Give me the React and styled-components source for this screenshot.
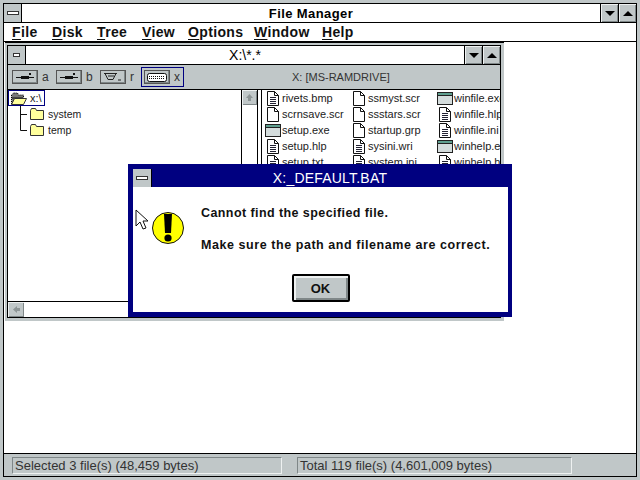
import React from 'react';
import styled, { createGlobalStyle, css } from 'styled-components';

const GRAY = '#c0c7c8';
const NAVY = '#000080';
const SANS = '"Liberation Sans", Arial, sans-serif';

const Global = createGlobalStyle`
    html, body {
        margin: 0;
        padding: 0;
        background: #fff;
    }
    * {
        box-sizing: border-box;
    }
`;

const Screen = styled.div`
    position: relative;
    width: 640px;
    height: 480px;
    overflow: hidden;
    padding: 3px;
    background: ${GRAY};
    font-family: ${SANS};
    color: #000;
`;

const Frame = styled.div`
    width: 100%;
    height: 100%;
    display: flex;
    flex-direction: column;
    border: 1px solid #000;
    background: #fff;
`;

const TitleBar = styled.div`
    flex: none;
    display: flex;
    align-items: stretch;
    height: ${(p) => p.$height}px;
    background: ${(p) => (p.$active ? NAVY : '#fff')};
    color: ${(p) => (p.$active ? '#fff' : '#000')};
    border-bottom: ${(p) => (p.$active ? 'none' : '1px solid #000')};
`;

const TitleText = styled.div`
    flex: 1;
    text-align: center;
    line-height: ${(p) => p.$line}px;
    font-size: ${(p) => p.$size}px;
    font-weight: ${(p) => p.$weight || 700};
    letter-spacing: ${(p) => p.$spacing || 0}px;
    white-space: nowrap;
`;

const bevel = css`
    background: ${GRAY};
    box-shadow: inset 1px 1px 0 #eef1f1, inset -1px -1px 0 #7f8788;
`;

const SysButton = styled.div`
    flex: none;
    width: ${(p) => p.$width}px;
    display: flex;
    align-items: center;
    justify-content: center;
    background: ${GRAY};
    border-right: 1px solid #000;
`;

const SysDash = styled.span`
    display: block;
    width: ${(p) => p.$width}px;
    height: 4px;
    background: #fff;
    border: 1px solid #333;
`;

const ArrowButton = styled.div`
    ${bevel};
    flex: none;
    width: 18px;
    display: flex;
    align-items: center;
    justify-content: center;
    border-left: 1px solid #000;
`;

const Triangle = styled.span`
    width: 0;
    height: 0;
    border-left: 5px solid transparent;
    border-right: 5px solid transparent;
    ${(p) => (p.$up ? 'border-bottom: 5px solid #000;' : 'border-top: 5px solid #000;')}
`;

const MenuBar = styled.div`
    flex: none;
    display: flex;
    height: 19px;
    padding-left: 8px;
    border-bottom: 1px solid #000;
    font-size: 14px;
    font-weight: 700;
    line-height: 18px;
    letter-spacing: 0.35px;
`;

const MenuItem = styled.div`
    width: ${(p) => p.$width}px;
    color: #111;
    u {
        text-underline-offset: 2px;
    }
`;

const Client = styled.div`
    flex: 1;
    min-height: 0;
    display: flex;
    flex-direction: column;
`;

const ChildWindow = styled.div`
    flex: none;
    width: 499px;
    height: 279px;
    margin-left: 1px;
    padding: 2px 3px 3px 2px;
    background: ${GRAY};
    border-top: 1px solid #000;
`;

const ChildInner = styled.div`
    height: 100%;
    display: flex;
    flex-direction: column;
    border: 1px solid #000;
    background: #fff;
`;

const DriveBar = styled.div`
    flex: none;
    display: flex;
    align-items: center;
    height: 25px;
    padding-left: 1px;
    background: ${GRAY};
    border-bottom: 1px solid #000;
`;

const Drive = styled.div`
    flex: none;
    display: flex;
    align-items: center;
    gap: 4px;
    width: ${(p) => (p.$selected ? 43 : 44)}px;
    height: 20px;
    padding-left: ${(p) => (p.$selected ? 2 : 3)}px;
    border: ${(p) => (p.$selected ? `1px solid ${NAVY}` : 'none')};
    font-size: 12px;
    color: #333;
`;

const DriveButton = styled.div`
    background: ${GRAY};
    width: 26px;
    height: 14px;
    display: flex;
    align-items: center;
    justify-content: center;
    outline: 1px solid #555;
    outline-offset: -1px;
    box-shadow: inset 1px 1px 0 #eef1f1, inset -2px -2px 0 #7f8788;
`;

const VolumeLabel = styled.div`
    margin-left: 108px;
    font-size: 11px;
    color: #333;
    white-space: nowrap;
`;

const Panes = styled.div`
    flex: 1;
    min-height: 0;
    display: flex;
`;

const TreePane = styled.div`
    flex: none;
    width: 233px;
    overflow: hidden;
`;

const TreeRow = styled.div`
    display: flex;
    align-items: center;
    gap: 3px;
    height: 16px;
    padding-left: ${(p) => p.$indent || 0}px;
    font-size: 10.5px;
    color: #222;
`;

const RootItem = styled.div`
    display: flex;
    width: fit-content;
    align-items: center;
    gap: 3px;
    height: 16px;
    padding: 0 2px;
    border: 1px solid ${NAVY};
    font-size: 11px;
    color: #222;
`;

const ScrollColumn = styled.div`
    flex: none;
    width: 17px;
    border-left: 1px solid #000;
    border-right: 1px solid #000;
    background: #fff;
`;

const ScrollButton = styled.div`
    ${bevel};
    width: ${(p) => p.$width || 15}px;
    height: 15px;
    display: flex;
    align-items: center;
    justify-content: center;
`;

const Splitter = styled.div`
    flex: none;
    width: 4px;
    border-right: 1px solid #000;
    background: #fff;
`;

const FileGrid = styled.div`
    flex: 1;
    min-width: 0;
    overflow: hidden;
    display: grid;
    grid-template-columns: 84px 88px 90px;
    grid-auto-rows: 16px;
    padding-left: 3px;
    align-content: start;
`;

const FileItem = styled.div`
    display: flex;
    align-items: center;
    gap: ${(p) => p.$gap}px;
    padding-left: ${(p) => p.$pad}px;
    font-size: 11px;
    color: #222;
    white-space: nowrap;
`;

const HScroll = styled.div`
    flex: none;
    height: 16px;
    border-top: 1px solid #000;
    display: flex;
    background: #fff;
`;

const StatusBar = styled.div`
    flex: none;
    margin-top: auto;
    height: 23px;
    display: flex;
    gap: 15px;
    padding: 3px 0 0 8px;
    background: ${GRAY};
    border-top: 1px solid #000;
`;

const StatusCell = styled.div`
    width: ${(p) => p.$width}px;
    height: 17px;
    padding-left: 2px;
    border: 1px solid;
    border-color: #7f8788 #eef1f1 #eef1f1 #7f8788;
    font-size: 13px;
    line-height: 15px;
    color: #333;
    white-space: nowrap;
`;

const Dialog = styled.div`
    position: absolute;
    left: 128px;
    top: 164px;
    width: 384px;
    height: 153px;
    background: ${NAVY};
    padding: 5px 4px 5px 5px;
`;

const DialogInner = styled.div`
    height: 100%;
    display: flex;
    flex-direction: column;
    background: #fff;
`;

const DialogBody = styled.div`
    flex: 1;
    display: grid;
    grid-template-columns: 68px 1fr;
    padding-top: 18px;
`;

const IconCell = styled.div`
    padding: 7px 0 0 19px;
`;

const Message = styled.div`
    margin-top: -8px;
    white-space: nowrap;
`;

const MessageLine = styled.div`
    font-size: 12.5px;
    font-weight: 700;
    letter-spacing: ${(p) => p.$spacing}px;
    line-height: 32px;
    color: #111;
`;

const ButtonRow = styled.div`
    flex: none;
    height: 38px;
    display: flex;
    justify-content: center;
`;

const OkButton = styled.button`
    width: 58px;
    height: 28px;
    padding: 0;
    background: ${GRAY};
    border: 2px solid #000;
    border-radius: 2px;
    font-family: ${SANS};
    font-size: 13px;
    font-weight: 700;
    color: #111;
    box-shadow: inset 2px 2px 0 #eef1f1, inset -2px -2px 0 #7f8788;
`;

const Cursor = styled.svg`
    position: absolute;
    left: 135px;
    top: 209px;
`;

const DocIcon = () => (
    <svg width="12" height="15" viewBox="0 0 12 15">
        <path d="M.5.5h7l4 4v10H.5z" fill="#fff" stroke="#111" />
        <path d="M7.5.5v4h4" fill="none" stroke="#111" />
        <path d="M3 6.5h6M3 8.5h6M3 10.5h6M3 12.5h6" stroke="#223" />
    </svg>
);

const PageIcon = () => (
    <svg width="12" height="15" viewBox="0 0 12 15">
        <path d="M.5.5h7l4 4v10H.5z" fill="#fff" stroke="#111" />
        <path d="M7.5.5v4h4" fill="none" stroke="#111" />
    </svg>
);

const ExeIcon = () => (
    <svg width="16" height="13" viewBox="0 0 16 13">
        <rect x=".5" y=".5" width="15" height="12" fill="#d4dcdc" stroke="#222" />
        <rect x="1" y="1" width="14" height="2" fill="#5f9f8f" />
        <path d="M1 3.5h14" stroke="#222" />
    </svg>
);

const FILE_ICONS = { doc: DocIcon, page: PageIcon, exe: ExeIcon };

const FolderIcon = () => (
    <svg width="15" height="12" viewBox="0 0 15 12">
        <path d="M.5 2.5l1-2h4l1 2h7v9H.5z" fill="#ffff9c" stroke="#333" />
    </svg>
);

const OpenFolderIcon = () => (
    <svg width="16" height="13" viewBox="0 0 16 13">
        <path d="M.5 12V3l2-2h4l1 2h5v3" fill="#777" stroke="#000" strokeDasharray="1 1" />
        <path d="M1 5h11v2H1z" fill="#444" />
        <path d="M.5 12.5l3-6h12l-3 6z" fill="#ffff9c" stroke="#333" />
    </svg>
);

const TreeBranch = ({ through }) => (
    <svg width="7" height="16" viewBox="0 0 7 16">
        <path d={through ? 'M.5 0v16M0 8.5h7' : 'M.5 0v8.5H7'} fill="none" stroke="#111" />
    </svg>
);

const FloppyIcon = () => (
    <svg width="20" height="8" viewBox="0 0 20 8">
        <path d="M1 4.5h18" stroke="#111" />
        <path d="M6 3h8v3H6z" fill="#111" />
        <rect x="14" y="0" width="2" height="2" fill="#111" />
    </svg>
);

const CdIcon = () => (
    <svg width="20" height="9" viewBox="0 0 20 9">
        <path d="M1 .5h13M2 .5l3 6h5l3-6" fill="none" stroke="#222" />
        <path d="M5 3h6" stroke="#222" />
        <path d="M15 7h3" stroke="#222" />
    </svg>
);

const RamIcon = () => (
    <svg width="20" height="9" viewBox="0 0 20 9">
        <rect x=".5" y=".5" width="19" height="8" rx="2" fill="#fff" stroke="#111" />
        <path d="M2 3.5h16M2 5.5h16" stroke="#111" strokeDasharray="1 1" />
    </svg>
);

const ScrollArrow = ({ left }) => (
    <svg width="9" height="9" viewBox="0 0 9 9" style={left ? { transform: 'rotate(-90deg)' } : undefined}>
        <path d="M4.5 1L8 5H6v3H3V5H1z" fill="#8d9596" />
    </svg>
);

const WarningIcon = () => (
    <svg width="32" height="32" viewBox="0 0 32 32">
        <circle cx="16" cy="16" r="15.5" fill="#ffff00" stroke="#111" />
        <path d="M12 2h8l-1 19h-6z" fill="#000" />
        <circle cx="16" cy="26" r="3.6" fill="#000" />
    </svg>
);

const DRIVES = [
    { letter: 'a', Icon: FloppyIcon },
    { letter: 'b', Icon: FloppyIcon },
    { letter: 'r', Icon: CdIcon },
    { letter: 'x', Icon: RamIcon, selected: true },
];

const FILES = [
    ['rivets.bmp', 'doc', 2], ['ssmyst.scr', 'page', 4], ['winfile.exe', 'exe', 0],
    ['scrnsave.scr', 'page', 2], ['ssstars.scr', 'page', 4], ['winfile.hlp', 'doc', 2],
    ['setup.exe', 'exe', 0], ['startup.grp', 'page', 4], ['winfile.ini', 'doc', 2],
    ['setup.hlp', 'doc', 2], ['sysini.wri', 'doc', 4], ['winhelp.exe', 'exe', 0],
    ['setup.txt', 'doc', 2], ['system.ini', 'doc', 4], ['winhelp.hlp', 'doc', 2],
];

const MENUS = [
    ['F', 'ile', 40], ['D', 'isk', 45], ['T', 'ree', 45],
    ['V', 'iew', 46], ['O', 'ptions', 66], ['W', 'indow', 68], ['H', 'elp', 40],
];

const App = () => {
    return (
        <Screen>
            <Global />
            <Frame>
                <TitleBar $height={19}>
                    <SysButton $width={18}><SysDash $width={12} /></SysButton>
                    <TitleText $size={13} $line={19} $spacing={0.4}>File Manager</TitleText>
                    <ArrowButton><Triangle /></ArrowButton>
                    <ArrowButton><Triangle $up /></ArrowButton>
                </TitleBar>
                <MenuBar>
                    {MENUS.map(([key, rest, width]) => (
                        <MenuItem key={key} $width={width}><u>{key}</u>{rest}</MenuItem>
                    ))}
                </MenuBar>
                <Client>
                    <ChildWindow>
                        <ChildInner>
                            <TitleBar $height={19}>
                                <SysButton $width={18}><SysDash $width={7} /></SysButton>
                                <TitleText $size={14} $line={18} $weight={400}>X:\*.*</TitleText>
                                <ArrowButton><Triangle /></ArrowButton>
                                <ArrowButton><Triangle $up /></ArrowButton>
                            </TitleBar>
                            <DriveBar>
                                {DRIVES.map(({ letter, Icon, selected }) => (
                                    <Drive key={letter} $selected={selected}>
                                        <DriveButton><Icon /></DriveButton>
                                        {letter}
                                    </Drive>
                                ))}
                                <VolumeLabel>X: [MS-RAMDRIVE]</VolumeLabel>
                            </DriveBar>
                            <Panes>
                                <TreePane>
                                    <RootItem><OpenFolderIcon />x:\</RootItem>
                                    <TreeRow $indent={12}>
                                        <TreeBranch through />
                                        <FolderIcon />
                                        system
                                    </TreeRow>
                                    <TreeRow $indent={12}>
                                        <TreeBranch />
                                        <FolderIcon />
                                        temp
                                    </TreeRow>
                                </TreePane>
                                <ScrollColumn>
                                    <ScrollButton><ScrollArrow /></ScrollButton>
                                </ScrollColumn>
                                <Splitter />
                                <FileGrid>
                                    {FILES.map(([name, kind, pad]) => {
                                        const Icon = FILE_ICONS[kind];
                                        return (
                                            <FileItem key={name} $pad={pad} $gap={kind === 'exe' ? 1 : 3}>
                                                <Icon />
                                                {name}
                                            </FileItem>
                                        );
                                    })}
                                </FileGrid>
                            </Panes>
                            <HScroll>
                                <ScrollButton $width={16}><ScrollArrow left /></ScrollButton>
                            </HScroll>
                        </ChildInner>
                    </ChildWindow>
                    <StatusBar>
                        <StatusCell $width={270}>Selected 3 file(s) (48,459 bytes)</StatusCell>
                        <StatusCell $width={275}>Total 119 file(s) (4,601,009 bytes)</StatusCell>
                    </StatusBar>
                </Client>
            </Frame>
            <Dialog>
                <DialogInner>
                    <TitleBar $height={18} $active>
                        <SysButton $width={19}><SysDash $width={12} /></SysButton>
                        <TitleText $size={14} $line={18} $weight={400} $spacing={0.2}>X:_DEFAULT.BAT</TitleText>
                    </TitleBar>
                    <DialogBody>
                        <IconCell><WarningIcon /></IconCell>
                        <Message>
                            <MessageLine $spacing={0.42}>Cannot find the specified file.</MessageLine>
                            <MessageLine $spacing={0.56}>Make sure the path and filename are correct.</MessageLine>
                        </Message>
                    </DialogBody>
                    <ButtonRow>
                        <OkButton>OK</OkButton>
                    </ButtonRow>
                </DialogInner>
            </Dialog>
            <Cursor width="13" height="21" viewBox="0 0 13 21">
                <path d="M1 1v16l4-4 3 7 3-1-3-7h5z" fill="#fff" stroke="#111" />
            </Cursor>
        </Screen>
    );
};

export default App;
